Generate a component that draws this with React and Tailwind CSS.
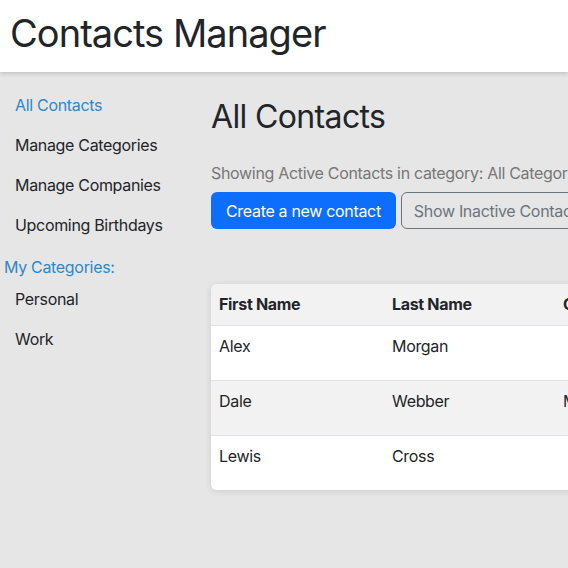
const navLinks = ['All Contacts', 'Manage Categories', 'Manage Companies', 'Upcoming Birthdays']
const categories = ['Personal', 'Work']

const contacts = [
  { first: 'Alex', last: 'Morgan', company: '' },
  { first: 'Dale', last: 'Webber', company: 'Meridian' },
  { first: 'Lewis', last: 'Cross', company: '' },
]

export default function App() {
  return (
    <div className="w-[568px] h-[568px] overflow-hidden bg-[#e6e6e6] text-[#212529] font-['Inter',sans-serif]">
      <header className="h-[72px] bg-white shadow-[0_2px_4px_rgba(0,0,0,0.15)] relative z-10 flex items-center px-[10px]">
        <h1 className="text-[38px] tracking-[-0.025em] leading-none text-[#212529] -mt-[6px]">Contacts Manager</h1>
      </header>

      <div className="flex">
        <nav className="w-[211px] shrink-0 pt-[21px]">
          <ul>
            {navLinks.map((l, i) => (
              <li key={l} className={`h-[40px] pl-[15px] text-[16px] tracking-[-0.02em] ${i === 0 ? 'text-[#2f86c8]' : 'text-[#212529]'}`}>
                {l}
              </li>
            ))}
          </ul>
          <div className="pl-[4px] mt-[2px] h-[32px] text-[16px] tracking-[-0.02em] text-[#2f86c8]">My Categories:</div>
          <ul>
            {categories.map(c => (
              <li key={c} className="h-[40px] pl-[15px] text-[16px] tracking-[-0.02em]">{c}</li>
            ))}
          </ul>
        </nav>

        <main className="w-[520px] shrink-0 pt-[27px]">
          <h2 className="text-[32px] tracking-[-0.02em] leading-[36px]">All Contacts</h2>
          <p className="mt-[26px] text-[16px] tracking-[-0.02em] text-[#777] whitespace-nowrap">Showing Active Contacts in category: All Categories</p>
          <div className="mt-[7px] flex gap-[5px]">
            <button className="h-[37px] px-[15px] rounded-[6px] bg-[#0d6efd] text-white text-[16px] tracking-[-0.02em] whitespace-nowrap">Create a new contact</button>
            <button className="h-[37px] px-[12px] rounded-[6px] border border-[#6c757d] text-[#6c757d] text-[16px] tracking-[-0.02em] whitespace-nowrap">Show Inactive Contacts</button>
          </div>

          <div className="mt-[55px] w-[500px] bg-white rounded-[6px] shadow-[0_1px_6px_rgba(0,0,0,0.12)] overflow-hidden">
            <table className="w-full text-[16px] tracking-[-0.02em] text-left">
              <thead>
                <tr className="bg-[#f2f2f2] h-[41px] border-b border-[#dee2e6]">
                  <th className="pl-[8px] w-[181px] font-bold">First Name</th>
                  <th className="w-[171px] font-bold">Last Name</th>
                  <th className="font-bold">Company</th>
                </tr>
              </thead>
              <tbody>
                {contacts.map((c, i) => (
                  <tr key={c.first} className={`h-[55px] align-top ${i % 2 === 1 ? 'bg-[#f2f2f2]' : 'bg-white'} ${i < contacts.length - 1 ? 'border-b border-[#dee2e6]' : ''}`}>
                    <td className="pl-[8px] pt-[8px]">{c.first}</td>
                    <td className="pt-[8px]">{c.last}</td>
                    <td className="pt-[8px]">{c.company}</td>
                  </tr>
                ))}
              </tbody>
            </table>
          </div>
        </main>
      </div>
    </div>
  )
}
